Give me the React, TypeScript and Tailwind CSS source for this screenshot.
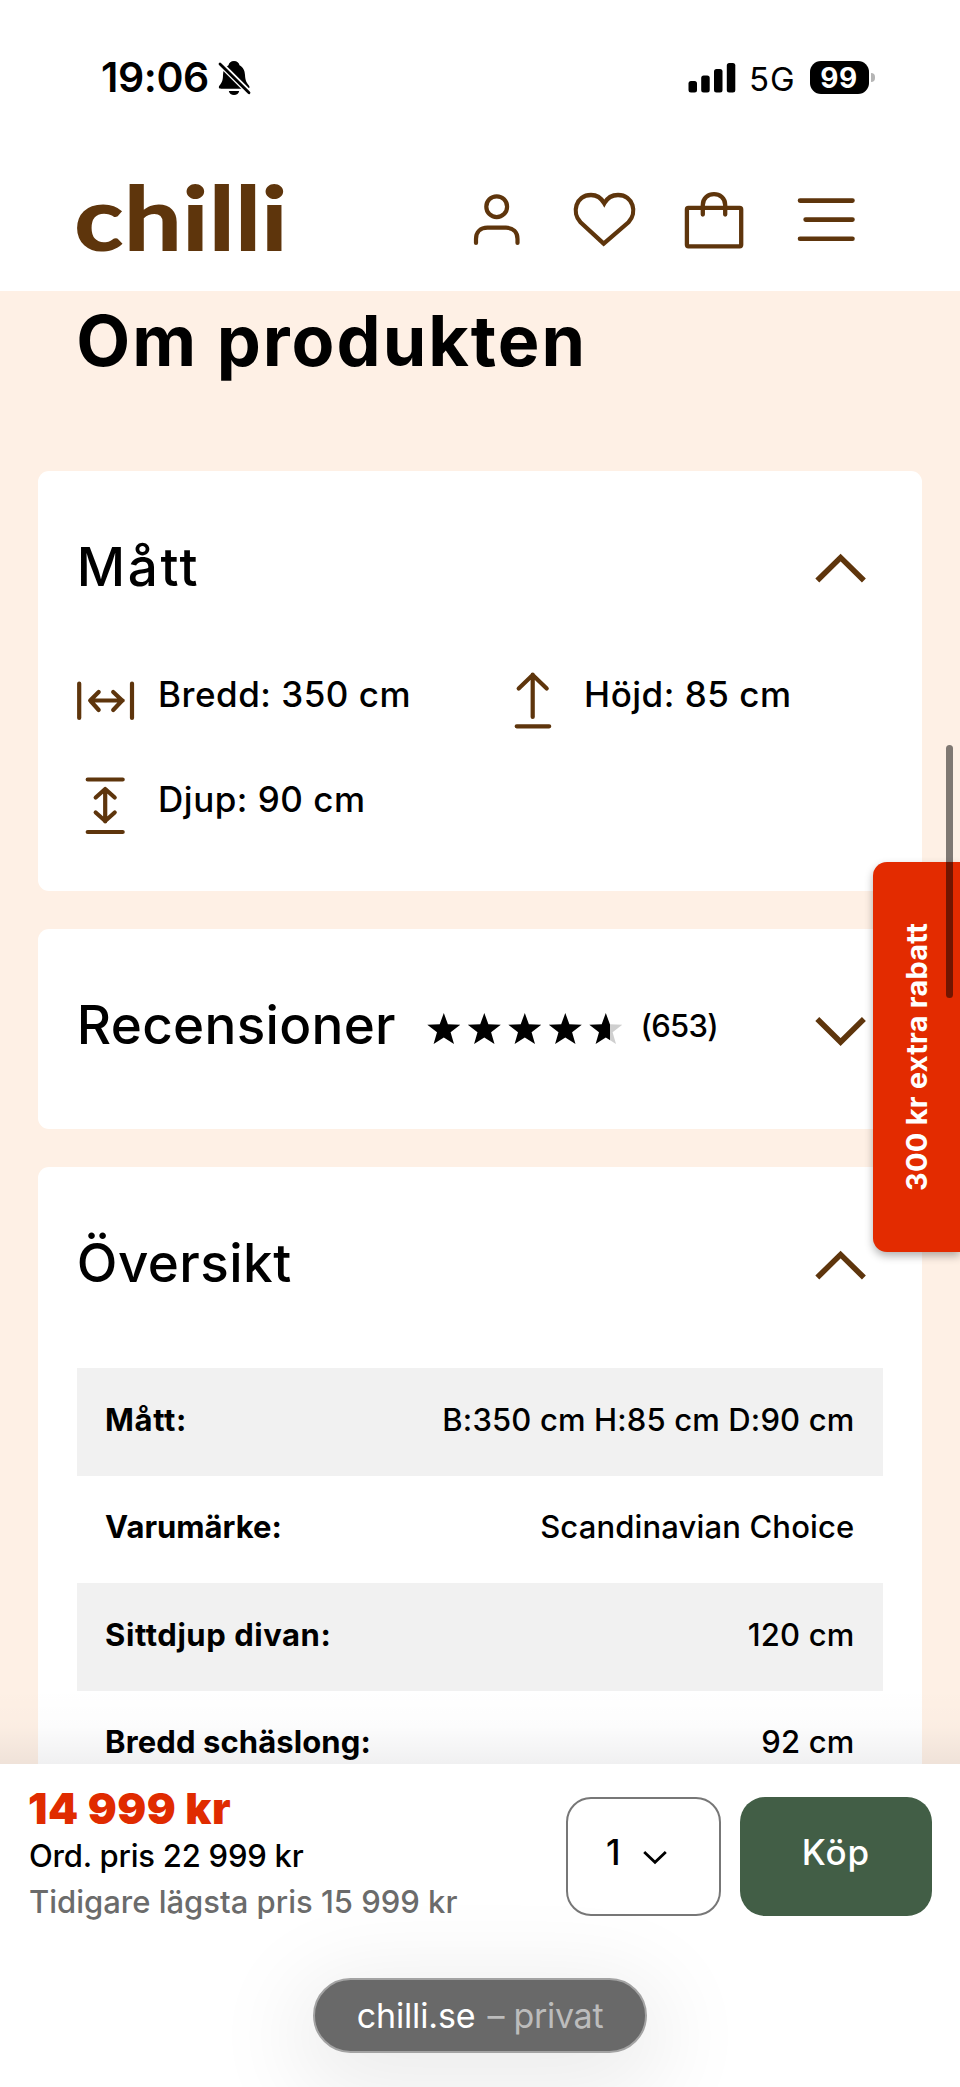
import React from 'react';

const BROWN = '#5e350c';

function StatusBar() {
  return (
    <div className="flex h-[155px] items-center justify-between pr-[84px] pl-[101px]">
      <div className="flex items-center">
        <span className="text-[41px] leading-none font-semibold tracking-[-0.42px]">19:06</span>
        <svg className="ml-[7px] h-[40px] w-[36px]" viewBox="216 58 36 40">
          <path
            d="M234 61c-3 0-5 1.800-5.500 4.200C224.800 67 223 70.500 223 75c0 6-1.500 8-3.300 10.300-1.700 2.200-.700 3.400 1.300 3.400h26.500c2 0 2.700-1.500 1.200-3.400C246.500 82.500 245.300 80.500 245 75c-.200-4.500-1.800-8-5.500-9.800C239 62.800 237 61 234 61z"
            fill="#000"
          />
          <path d="M228.800 91h10.400c-.500 2.500-2.500 4-5.200 4s-4.700-1.500-5.200-4z" fill="#000" />
          <path d="M219 62.500L250 93.500" stroke="#fff" strokeWidth="6" />
          <path d="M220 64L249 92.700" stroke="#000" strokeWidth="2.800" strokeLinecap="round" />
        </svg>
      </div>
      <div className="flex items-center">
        <svg className="h-[32px] w-[48px]" viewBox="688 62 48 32">
          <rect x="688.500" y="81" width="8.500" height="11.500" rx="2.500" />
          <rect x="701.200" y="75.500" width="8.500" height="17" rx="2.500" />
          <rect x="714" y="69" width="8.500" height="23.500" rx="2.500" />
          <rect x="726.800" y="63" width="8.500" height="29.500" rx="2.500" />
        </svg>
        <span className="ml-[13px] pt-[3px] text-[33px] leading-none tracking-[0.9px]">5G</span>
        <span className="ml-[14px] flex h-[33px] w-[59px] items-center justify-center rounded-[11px] bg-black text-[28px] leading-none font-bold tracking-[0.5px] text-white">
          99
        </span>
        <span className="mr-px ml-[2.500px] h-[9px] w-[4px] rounded-r-full bg-[#b5b5b5]" />
      </div>
    </div>
  );
}

function Header() {
  return (
    <header className="flex h-[136px] items-start justify-between pr-[102px] pl-[74px]">
      <div className="mt-[11px] origin-left scale-x-[1.143] font-[Lato] text-[90px] leading-[100px] font-black text-[#5e350c]">
        chilli
      </div>
      <nav className="mt-[35px] flex" aria-label="Meny">
        <svg className="h-[60px] w-[48px]" viewBox="473 190 48 60" fill="none" stroke={BROWN} strokeWidth="4.200" strokeLinecap="round">
          <circle cx="496.700" cy="206.700" r="10.400" />
          <path d="M476 243v-4c0-7 4.500-11.300 11.500-11.300h18.500c7 0 11.500 4.300 11.500 11.300v4" />
        </svg>
        <svg className="ml-[51px] h-[60px] w-[66px]" viewBox="572 190 66 60" fill="none" stroke={BROWN} strokeWidth="4.300">
          <path d="M603.700 243.700L580.500 222.300C571.500 213 575.500 195 591 195c6 0 10.500 3.500 13.300 8.300C607 198.500 611.500 195 618 195c15.500 0 19.500 18 10.500 27.300z" />
        </svg>
        <svg className="ml-[45px] h-[60px] w-[62px]" viewBox="683 190 62 60" fill="none" stroke={BROWN} strokeWidth="4.300" strokeLinecap="round">
          <rect x="686.900" y="207.900" width="54.300" height="38.400" rx="1.500" />
          <path d="M702.800 214.500V205c0-14.600 22.400-14.600 22.400 0v9.500" />
        </svg>
        <svg className="ml-[51px] h-[60px] w-[62px]" viewBox="796 190 62 60" fill="none" stroke={BROWN} strokeWidth="4.600" strokeLinecap="round">
          <path d="M800 200.600h52.500M805.600 219.600h46.900M800 238.700h52.500" />
        </svg>
      </nav>
    </header>
  );
}

function Chevron({ open }: { open: boolean }) {
  return (
    <svg className="ml-auto h-[60px] w-[56px]" viewBox="813 536 56 60" fill="none" stroke={BROWN} strokeWidth="5.600">
      <path d={open ? 'M817.300 580.500L840.600 557.600L863.900 580.500' : 'M817.300 560L840.600 583L863.900 560'} />
    </svg>
  );
}

function Card({
  title,
  open,
  titleClass = 'tracking-[0.45px]',
  extra,
  children,
}: {
  title: string;
  open: boolean;
  titleClass?: string;
  extra?: React.ReactNode;
  children?: React.ReactNode;
}) {
  return (
    <section className="rounded-[11px] bg-white">
      <div className="flex h-[191px] items-center pr-[53px] pl-[38.500px]">
        <h2 className={`pt-[2px] text-[53px] leading-none font-medium ${titleClass}`}>{title}</h2>
        {extra}
        <Chevron open={open} />
      </div>
      {children}
    </section>
  );
}

function Measure({ text, box, d }: { text: string; box: string; d: string }) {
  return (
    <div className="flex h-[66px] items-center">
      <svg className="h-[66px] w-[60px] overflow-visible" viewBox={box} fill="none" stroke={BROWN} strokeWidth="4.200" strokeLinecap="round" strokeLinejoin="round">
        <path d={d} />
      </svg>
      <span className="ml-[21.500px] text-[35px] leading-none font-medium tracking-[0.5px]">{text}</span>
    </div>
  );
}

const STAR = 'M16.500 0L20.600 11.300L33 11.800L23.300 19.300L26.700 31L16.500 24.400L6.300 31L9.700 19.300L0 11.800L12.400 11.300z';

function Rating() {
  return (
    <>
      <svg className="ml-[31px] h-[60px] w-[196px]" viewBox="427 994.5 196 60">
        <defs>
          <linearGradient id="partial">
            <stop offset="0.620" stopColor="#000" />
            <stop offset="0.620" stopColor="#cfcfcf" />
          </linearGradient>
        </defs>
        {[0, 1, 2, 3, 4].map((i) => (
          <path key={i} d={STAR} transform={`translate(${427.3 + i * 40.5} 1012.5)`} fill={i === 4 ? 'url(#partial)' : '#000'} />
        ))}
      </svg>
      <span className="ml-[17.500px] pt-px text-[31px] leading-none font-medium tracking-[-0.64px]">(653)</span>
    </>
  );
}

const SPECS = [
  ['Mått:', 'B:350 cm H:85 cm D:90 cm', 'tracking-[0.6px]'],
  ['Varumärke:', 'Scandinavian Choice', 'tracking-[0px]'],
  ['Sittdjup divan:', '120 cm', 'tracking-[0.55px]'],
  ['Bredd schäslong:', '92 cm', 'tracking-[0.1px]'],
];

function BuyBar() {
  return (
    <footer className="relative h-[323px] shrink-0 bg-white">
      <div className="absolute inset-x-0 bottom-full h-[76px] bg-linear-to-b from-[#00001400] via-[#00001403] to-[#0000140f]" />
      <div className="flex h-[152px] justify-between px-[28px]">
        <div className="pt-[18px] whitespace-nowrap">
          <p className="text-[43px] leading-[52px] font-black tracking-[0.5px] text-[#e02b00]">14 999 kr</p>
          <p className="pt-px pl-px text-[31px] leading-[42px] font-medium tracking-[-0.22px]">Ord. pris 22 999 kr</p>
          <p className="pl-px text-[31px] leading-[49px] font-medium text-[#6b6b6b]">Tidigare lägsta pris 15 999 kr</p>
        </div>
        <div className="flex gap-[19px] pt-[33px]">
          <div className="flex h-[119px] w-[155px] items-center rounded-[25px] border-2 border-[#777] pb-[9px] pl-[38px]">
            <span className="text-[35px] leading-none font-medium">1</span>
            <svg className="ml-[19px] h-[30px] w-[30px]" viewBox="640 1836.500 30 30" fill="none" stroke="#000" strokeWidth="2.800">
              <path d="M644.200 1851.500L655 1861.800L665.800 1851.500" />
            </svg>
          </div>
          <button className="h-[119px] w-[192px] rounded-[25px] bg-[#425e46] pb-[9px] text-[35px] leading-none font-medium tracking-[1px] text-white">
            Köp
          </button>
        </div>
      </div>
      <div className="relative mx-auto mt-[62px] flex h-[75px] w-[334px] items-center justify-center gap-[12px] rounded-full border-2 border-[#a3a3a3] bg-[#696969] text-[34px] leading-none whitespace-nowrap text-white shadow-[0_20px_90px_20px_rgba(0,0,0,0.08)]">
        <span className="tracking-[-0.15px]">chilli.se</span>
        <span className="tracking-[-0.28px] text-[#bcbcbc]">– privat</span>
      </div>
    </footer>
  );
}

export default function App() {
  return (
    <div className="relative flex h-[2087px] w-[960px] flex-col overflow-hidden bg-white font-[Inter,sans-serif] text-black">
      <StatusBar />
      <Header />
      <main className="min-h-0 flex-1 overflow-hidden bg-[#fef0e5] px-[38.300px]">
        <h1 className="pt-px pl-[38px] text-[70px] leading-[97px] font-bold tracking-[2px]">Om produkten</h1>
        <div className="mt-[81.500px] flex flex-col gap-[38px]">
          <Card title="Mått" open titleClass="tracking-[2.600px]">
            <div className="grid grid-cols-[426px_1fr] gap-y-[39px] pb-[58.500px] pl-[38.300px]">
              <Measure
                text="Bredd: 350 cm"
                box="76.800 661.500 60 66"
                d="M79 683v34.500M131.800 683v34.500M90 700h32.500M98.500 691.500L90 700L98.500 709.500M113 691.500L122 700L113 709.500"
              />
              <Measure
                text="Höjd: 85 cm"
                box="502.800 661.500 60 66"
                d="M532.500 674v42.500M518.500 688L532.500 674.500L546.500 688M516.500 725.800h32.500"
              />
              <Measure
                text="Djup: 90 cm"
                box="76.800 766.500 60 66"
                d="M87.500 779h35M87.500 831.500h35M105 789v32M95.500 797L105 788.500L114.500 797M95.500 812L105 820.500L114.500 812"
              />
            </div>
          </Card>
          <div className="[&>section]:pb-[9px]">
            <Card title="Recensioner" open={false} titleClass="tracking-[0.3px]" extra={<Rating />} />
          </div>
          <Card title="Översikt" open>
            <dl className="mx-[38.300px] mt-[10px]">
              {SPECS.map(([name, value, tracking]) => (
                <div key={name} className="flex h-[107.500px] items-center justify-between pr-[29px] pb-[5px] pl-[28.500px] text-[31px] leading-none odd:bg-[#f1f1f1]">
                  <dt className={`font-bold ${tracking}`}>{name}</dt>
                  <dd className="font-medium tracking-[0.15px]">{value}</dd>
                </div>
              ))}
            </dl>
          </Card>
        </div>
      </main>
      <BuyBar />
      <aside className="absolute top-[862px] right-0 flex h-[390px] w-[87px] items-center justify-center rounded-l-[14px] bg-[#e32b00] shadow-[0_4px_8px_rgba(0,0,0,0.3)]">
        <span className="rotate-180 text-[29px] leading-none font-bold tracking-[0.220px] whitespace-nowrap text-white [writing-mode:vertical-rl]">
          300 kr extra rabatt
        </span>
      </aside>
      <div className="absolute top-[745px] right-[7px] h-[253px] w-[7.500px] rounded-full bg-black/50" />
    </div>
  );
}
